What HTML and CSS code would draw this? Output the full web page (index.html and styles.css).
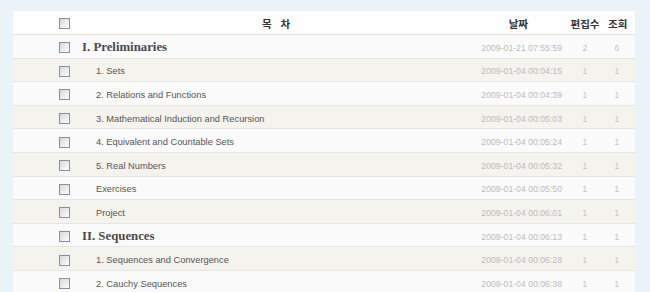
FILE: index.html
```html
<!DOCTYPE html>
<html lang="ko">
<head>
    <meta charset="UTF-8">
    <title>목차</title>
    <link rel="stylesheet" href="styles.css">
</head>
<body>
    <div class="toc">
        <div class="toc-row toc-head">
            <span class="chk"></span>
            <span class="title">목&nbsp;&nbsp;&nbsp;차</span>
            <span class="date">날짜</span>
            <span class="num">편집수</span>
            <span class="num">조회</span>
        </div>
        <div class="toc-row section">
            <span class="chk"></span>
            <span class="title">I. Preliminaries</span>
            <span class="date">2009-01-21 07:55:59</span>
            <span class="num">2</span>
            <span class="num">6</span>
        </div>
        <div class="toc-row item alt">
            <span class="chk"></span>
            <span class="title">1. Sets</span>
            <span class="date">2009-01-04 00:04:15</span>
            <span class="num">1</span>
            <span class="num">1</span>
        </div>
        <div class="toc-row item">
            <span class="chk"></span>
            <span class="title">2. Relations and Functions</span>
            <span class="date">2009-01-04 00:04:39</span>
            <span class="num">1</span>
            <span class="num">1</span>
        </div>
        <div class="toc-row item alt">
            <span class="chk"></span>
            <span class="title">3. Mathematical Induction and Recursion</span>
            <span class="date">2009-01-04 00:05:03</span>
            <span class="num">1</span>
            <span class="num">1</span>
        </div>
        <div class="toc-row item">
            <span class="chk"></span>
            <span class="title">4. Equivalent and Countable Sets</span>
            <span class="date">2009-01-04 00:05:24</span>
            <span class="num">1</span>
            <span class="num">1</span>
        </div>
        <div class="toc-row item alt">
            <span class="chk"></span>
            <span class="title">5. Real Numbers</span>
            <span class="date">2009-01-04 00:05:32</span>
            <span class="num">1</span>
            <span class="num">1</span>
        </div>
        <div class="toc-row item">
            <span class="chk"></span>
            <span class="title">Exercises</span>
            <span class="date">2009-01-04 00:05:50</span>
            <span class="num">1</span>
            <span class="num">1</span>
        </div>
        <div class="toc-row item alt">
            <span class="chk"></span>
            <span class="title">Project</span>
            <span class="date">2009-01-04 00:06:01</span>
            <span class="num">1</span>
            <span class="num">1</span>
        </div>
        <div class="toc-row section">
            <span class="chk"></span>
            <span class="title">II. Sequences</span>
            <span class="date">2009-01-04 00:06:13</span>
            <span class="num">1</span>
            <span class="num">1</span>
        </div>
        <div class="toc-row item alt">
            <span class="chk"></span>
            <span class="title">1. Sequences and Convergence</span>
            <span class="date">2009-01-04 00:06:28</span>
            <span class="num">1</span>
            <span class="num">1</span>
        </div>
        <div class="toc-row item">
            <span class="chk"></span>
            <span class="title">2. Cauchy Sequences</span>
            <span class="date">2009-01-04 00:06:38</span>
            <span class="num">1</span>
            <span class="num">1</span>
        </div>
    </div>
</body>
</html>
```

FILE: styles.css
```css
body {
    margin: 0;
    padding: 11px 15px 0 13px;
    background-color: #eaf3f8;
    font-family: "Liberation Sans", Arial, sans-serif;
    overflow: hidden;
}

.toc {
    background-color: #fbfbfb;
}

.toc-row {
    display: grid;
    grid-template-columns: 46px 23px 1fr 120px 46px 18px;
    align-items: center;
    height: 23.6px;
    box-sizing: border-box;
    border-bottom: 1px solid #e4e4e4;
    padding-top: 3px;
    padding-right: 9px;
    color: #555;
    font-size: 9.3px;
}

.toc-row .chk {
    grid-column: 2;
    width: 9px;
    height: 9px;
    border: 1px solid #7d93ad;
    background: linear-gradient(135deg, #d8d8d8, #fdfdfd);
}

.toc-row.alt {
    background-color: #f5f3ee;
}

.toc-head {
    height: 24px;
    padding-top: 1px;
    background-color: #fefefe;
    border-bottom: 1px solid #ebe3d5;
    font-family: "Noto Sans CJK KR", sans-serif;
    font-weight: bold;
    font-size: 10.5px;
    color: #333;
}

.toc-head .title {
    text-align: center;
    padding-left: 28px;
}

.toc-head .date {
    text-align: right;
    padding-right: 34px;
    font-size: 10.5px;
    color: #333;
}

.toc-head .num {
    color: #333;
    font-size: 10.5px;
}

.section .title {
    font-family: "Liberation Serif", "Times New Roman", serif;
    font-weight: bold;
    font-size: 12.8px;
    color: #4a4a4a;
}

.item .title {
    padding-left: 14px;
}

.date {
    text-align: right;
    font-size: 8.7px;
    color: #bbb;
}

.num {
    text-align: center;
    white-space: nowrap;
    font-size: 8.7px;
    color: #c4c4c4;
}
```
